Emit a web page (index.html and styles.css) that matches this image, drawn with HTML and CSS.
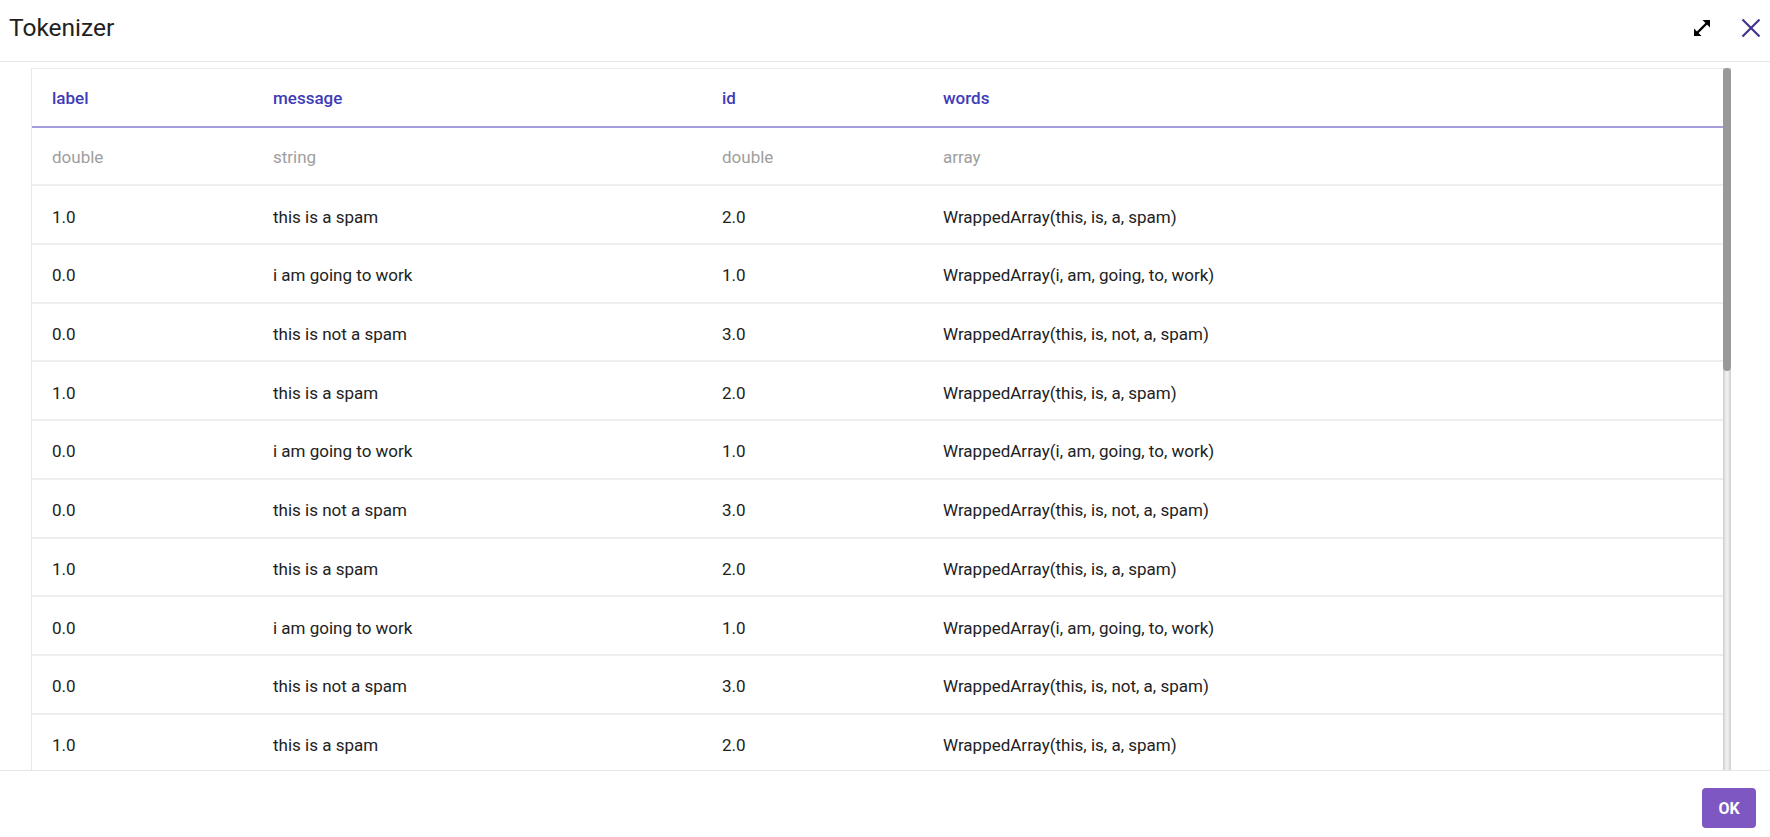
FILE: index.html
```html
<!DOCTYPE html>
<html>
<head>
<meta charset="utf-8">
<link rel="stylesheet" href="styles.css">
</head>
<body>
<div class="dialog">
  <div class="header">
    <div class="title">Tokenizer</div>
    <div class="actions">
      <button class="icon-btn" aria-label="expand">
        <svg width="20" height="20" viewBox="0 0 20 20">
          <line x1="5" y1="15" x2="15" y2="5" stroke="#000" stroke-width="2.4"/>
          <polygon points="18,2 18,9.5 10.5,2" fill="#000"/>
          <polygon points="2,18 2,10.5 9.5,18" fill="#000"/>
        </svg>
      </button>
      <button class="icon-btn close" aria-label="close">
        <svg width="20" height="20" viewBox="0 0 20 20">
          <path d="M1.5 1.5 L18.5 18.5 M18.5 1.5 L1.5 18.5" stroke="#43328f" stroke-width="2.2" fill="none"/>
        </svg>
      </button>
    </div>
  </div>
  <div class="content">
    <div class="scroll">
      <div class="grid">
        <div class="row head"><div>label</div><div>message</div><div>id</div><div>words</div></div>
        <div class="row types"><div>double</div><div>string</div><div>double</div><div>array</div></div>
        <div class="row data"><div>1.0</div><div>this is a spam</div><div>2.0</div><div>WrappedArray(this, is, a, spam)</div></div>
        <div class="row data"><div>0.0</div><div>i am going to work</div><div>1.0</div><div>WrappedArray(i, am, going, to, work)</div></div>
        <div class="row data"><div>0.0</div><div>this is not a spam</div><div>3.0</div><div>WrappedArray(this, is, not, a, spam)</div></div>
        <div class="row data"><div>1.0</div><div>this is a spam</div><div>2.0</div><div>WrappedArray(this, is, a, spam)</div></div>
        <div class="row data"><div>0.0</div><div>i am going to work</div><div>1.0</div><div>WrappedArray(i, am, going, to, work)</div></div>
        <div class="row data"><div>0.0</div><div>this is not a spam</div><div>3.0</div><div>WrappedArray(this, is, not, a, spam)</div></div>
        <div class="row data"><div>1.0</div><div>this is a spam</div><div>2.0</div><div>WrappedArray(this, is, a, spam)</div></div>
        <div class="row data"><div>0.0</div><div>i am going to work</div><div>1.0</div><div>WrappedArray(i, am, going, to, work)</div></div>
        <div class="row data"><div>0.0</div><div>this is not a spam</div><div>3.0</div><div>WrappedArray(this, is, not, a, spam)</div></div>
        <div class="row data"><div>1.0</div><div>this is a spam</div><div>2.0</div><div>WrappedArray(this, is, a, spam)</div></div>
        <div class="row data"><div>0.0</div><div>i am going to work</div><div>1.0</div><div>WrappedArray(i, am, going, to, work)</div></div>
        <div class="row data"><div>0.0</div><div>this is not a spam</div><div>3.0</div><div>WrappedArray(this, is, not, a, spam)</div></div>
      </div>
    </div>
    <div class="scrollbar"><div class="thumb"></div></div>
  </div>
  <div class="footer">
    <button class="ok">OK</button>
  </div>
</div>
</body>
</html>
```
FILE: styles.css
```css
html, body {
  margin: 0;
  padding: 0;
  background: #fff;
}
body {
  font-family: Roboto, "Liberation Sans", Arial, sans-serif;
  color: #212121;
}
.dialog {
  display: flex;
  flex-direction: column;
  height: 837px;
  width: 1770px;
}
.header {
  height: 62px;
  flex: none;
  box-sizing: border-box;
  border-bottom: 1px solid #e6e6e6;
  display: flex;
  align-items: center;
  justify-content: space-between;
  padding: 0 9px 6px 9px;
}
.title {
  font-size: 24.5px;
  font-weight: 400;
  color: #212121;
}
.actions {
  display: flex;
  align-items: center;
  gap: 29px;
}
.icon-btn {
  border: 0;
  background: none;
  padding: 0;
  width: 20px;
  height: 20px;
  display: flex;
  align-items: center;
  justify-content: center;
  cursor: pointer;
}
.content {
  flex: 1;
  min-height: 0;
  padding: 6px 39px 0 31px;
  display: flex;
  flex-direction: row;
}
.scroll {
  flex: 1;
  min-width: 0;
  overflow: hidden;
}
.scrollbar {
  flex: none;
  width: 8px;
  background: linear-gradient(to right, #cdcdcd 0, #e2e2e2 25%, #f3f3f3 50%, #e2e2e2 75%, #cdcdcd 100%);
}
.thumb {
  height: 303px;
  background: #999;
  border-radius: 4px;
}
.grid {
  border-left: 1px solid #e8e8e8;
  border-top: 1px solid #ececec;
}
.row {
  display: grid;
  grid-template-columns: 221px 449px 221px 1fr;
  height: 58.7px;
  box-sizing: border-box;
  border-bottom: 2px solid #eeeeee;
  align-items: center;
  font-size: 17px;
  color: #222;
  padding-top: 1px;
}
.row.data {
  padding-top: 4px;
}
.row > div {
  padding: 0 20px;
  white-space: nowrap;
}
.row.head {
  border-bottom: 2px solid #a49ddb;
  color: #3e3cb8;
  font-weight: 500;
}
.row.types {
  color: #9e9e9e;
}
.footer {
  flex: none;
  height: 67px;
  box-sizing: border-box;
  border-top: 1px solid #e6e6e6;
  display: flex;
  justify-content: flex-end;
  align-items: flex-start;
  padding: 17px 14px 0 0;
}
.ok {
  width: 54px;
  height: 40px;
  border: 0;
  border-radius: 4px;
  background: #7e57c2;
  color: #fff;
  font-family: Roboto, "Liberation Sans", Arial, sans-serif;
  font-size: 16px;
  font-weight: 700;
  cursor: pointer;
}
```
